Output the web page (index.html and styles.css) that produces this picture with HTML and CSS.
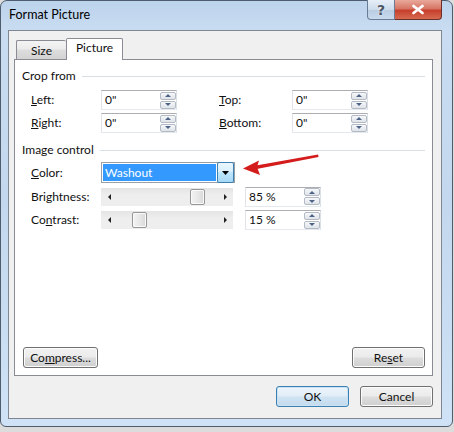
FILE: index.html
```html
<!DOCTYPE html>
<html>
<head>
<meta charset="utf-8">
<link rel="stylesheet" href="styles.css">
</head>
<body>
<div class="window">
  <div class="titlebar">
    <span class="title">Format Picture</span>
    <div class="caption">
      <div class="cbtn help">?</div>
      <div class="cbtn close">
        <svg width="14" height="11" viewBox="0 0 14 11"><path d="M2.5 2 L11.5 9 M11.5 2 L2.5 9" stroke="#fff" stroke-width="2.8" stroke-linecap="round"/></svg>
      </div>
    </div>
  </div>
  <div class="client">
    <div class="tabs">
      <div class="tab">Size</div>
      <div class="tab active">Picture</div>
    </div>
    <div class="panel">
      <div class="group-head"><span>Crop from</span><div class="rule"></div></div>
      <div class="crop-grid">
        <span class="lbl"><u>L</u>eft:</span>
        <div class="spin-box"><span>0"</span><div class="spinner"><div class="sb up"></div><div class="sb dn"></div></div></div>
        <span></span>
        <span class="lbl"><u>T</u>op:</span>
        <div class="spin-box"><span>0"</span><div class="spinner"><div class="sb up"></div><div class="sb dn"></div></div></div>
        <span class="lbl"><u>R</u>ight:</span>
        <div class="spin-box"><span>0"</span><div class="spinner"><div class="sb up"></div><div class="sb dn"></div></div></div>
        <span></span>
        <span class="lbl"><u>B</u>ottom:</span>
        <div class="spin-box"><span>0"</span><div class="spinner"><div class="sb up"></div><div class="sb dn"></div></div></div>
      </div>
      <div class="group-head second"><span>Image control</span><div class="rule"></div></div>
      <div class="ic-grid">
        <span class="lbl"><u>C</u>olor:</span>
        <div class="combo"><div class="sel">Washout</div><div class="drop"><svg width="7" height="4" viewBox="0 0 7 4"><path d="M0 0 H7 L3.5 4 Z" fill="#000"/></svg></div></div>
        <span></span>
        <span class="lbl">Bri<u>g</u>htness:</span>
        <div class="scroll"><i class="al"></i><div class="track"><div class="thumb" style="margin-left:73px"></div></div><i class="ar"></i></div>
        <div class="spin-box"><span>85 %</span><div class="spinner"><div class="sb up"></div><div class="sb dn"></div></div></div>
        <span class="lbl">Co<u>n</u>trast:</span>
        <div class="scroll"><i class="al"></i><div class="track"><div class="thumb" style="margin-left:15px"></div></div><i class="ar"></i></div>
        <div class="spin-box"><span>15 %</span><div class="spinner"><div class="sb up"></div><div class="sb dn"></div></div></div>
      </div>
      <div class="fill"></div>
      <div class="panel-buttons">
        <button class="btn compress">Co<u>m</u>press...</button>
        <button class="btn">Re<u>s</u>et</button>
      </div>
    </div>
    <div class="dlg-buttons">
      <button class="btn default">OK</button>
      <button class="btn">Cancel</button>
    </div>
  </div>
</div>
<svg class="annot" width="454" height="432" viewBox="0 0 454 432">
  <path d="M318 154.5 L256 165.5 L256.6 169 L318.6 157 Z" fill="#d41c1c"/>
  <path d="M243 168.5 L259 160.5 L257 167 L260 175 Z" fill="#d41c1c"/>
</svg>
</body>
</html>
```
FILE: styles.css
```css
* { box-sizing: border-box; }
html, body { margin: 0; padding: 0; }
body {
  width: 454px;
  height: 432px;
  background: #dcdcdc;
  font-family: Lato, "Noto Sans", sans-serif;
  font-size: 12px;
  color: #111;
  overflow: hidden;
  position: relative;
}
u { text-decoration: underline; text-underline-offset: 1px; }
.window {
  width: 453px;
  height: 427px;
  border: 1px solid #4e5d6e;
  border-radius: 7px 7px 6px 6px;
  background: linear-gradient(180deg, #bcd3ec 0px, #c9dcf1 30px, #c3d8ee 200px, #cfe2f6 100%);
  display: flex;
  flex-direction: column;
}
.titlebar {
  height: 29px;
  display: flex;
  align-items: flex-start;
  flex: none;
}
.title {
  margin-left: 8px;
  margin-top: 6px;
  font-size: 12.5px;
  line-height: 16px;
  color: #000;
}
.caption {
  margin-left: auto;
  margin-right: 10px;
  display: flex;
  margin-top: -1px;
}
.cbtn {
  height: 20px;
  border: 1px solid #6a7c93;
  border-top: none;
  display: flex;
  align-items: center;
  justify-content: center;
}
.help {
  width: 28px;
  border-radius: 0 0 0 4px;
  background: linear-gradient(180deg, #e6eef8 0%, #cddbeb 50%, #b7cbe2 51%, #c9daee 100%);
  color: #4a5566;
  font-family: "DejaVu Sans", sans-serif;
  font-size: 14px;
  font-weight: bold;
  line-height: 18px;
  text-shadow: 0 0 2px #fff;
}
.close {
  width: 47px;
  border-color: #6b2f2a;
  border-left: none;
  border-radius: 0 0 4px 0;
  background: linear-gradient(180deg, #e9a99b 0%, #d77565 45%, #c7402d 55%, #d66a50 100%);
}
.client {
  margin-left: 7px;
  width: 434px;
  height: 389px;
  border: 1px solid #7f8892;
  background: #f0f0f0;
  padding: 7px 8px 0 5px;
  display: flex;
  flex-direction: column;
  flex: none;
}
.tabs {
  display: flex;
  align-items: flex-end;
  height: 21px;
  padding-left: 2px;
  flex: none;
}
.tab {
  height: 19px;
  width: 50px;
  border: 1px solid #898c95;
  border-bottom: none;
  border-right: none;
  border-radius: 2px 2px 0 0;
  background: linear-gradient(180deg, #f4f4f4 0%, #ebebeb 45%, #dddddd 50%, #d3d3d3 100%);
  text-align: center;
  line-height: 18px;
  padding-top: 1px;
}
.tab.active {
  height: 22px;
  width: 57px;
  border-right: 1px solid #898c95;
  background: #fff;
  margin-bottom: -1px;
  position: relative;
  z-index: 1;
  line-height: 18px;
  padding-top: 0;
}
.panel {
  height: 317px;
  border: 1px solid #898c95;
  background: #fff;
  padding: 8px 7px 7px 7px;
  display: flex;
  flex-direction: column;
  flex: none;
}
.group-head {
  display: flex;
  align-items: center;
  height: 15px;
  line-height: 15px;
}
.group-head span { white-space: nowrap; }
.rule {
  flex: 1;
  height: 1px;
  background: #d5dfe5;
  margin-left: 6px;
  margin-top: 1px;
}
.group-head.second { margin-top: 9px; }
.crop-grid {
  margin-top: 7px;
  padding-left: 9px;
  display: grid;
  grid-template-columns: 70px 76px 42px 73px 76px;
  grid-auto-rows: 20px;
  row-gap: 3px;
  align-items: center;
}
.lbl { line-height: 16px; white-space: nowrap; }
.spin-box {
  width: 76px;
  height: 20px;
  border: 1px solid #abadb3;
  border-left-color: #e2e3ea;
  border-right-color: #dbdfe6;
  border-bottom-color: #e3e9ef;
  background: #fff;
  display: flex;
  align-items: center;
  padding-left: 3px;
}
.spin-box span { flex: 1; line-height: 16px; }
.spinner {
  width: 16px;
  height: 17px;
  display: flex;
  flex-direction: column;
  gap: 1px;
}
.sb {
  height: 8px;
  border: 1px solid #b4bac4;
  border-radius: 2px;
  background: linear-gradient(180deg, #f6f8fa, #dfe4ea);
  display: flex;
  align-items: center;
  justify-content: center;
}
.sb::after {
  content: "";
  width: 0; height: 0;
  border-left: 3px solid transparent;
  border-right: 3px solid transparent;
}
.sb.up::after { border-bottom: 3px solid #4e6385; }
.sb.dn::after { border-top: 3px solid #4e6385; }
.ic-grid {
  margin-top: 5px;
  padding-left: 9px;
  display: grid;
  grid-template-columns: 70px 144px 76px;
  grid-template-rows: 21px 19px 20px;
  row-gap: 4px;
  align-items: center;
}
.combo {
  width: 134px;
  height: 21px;
  border: 1px solid #9aa0a8;
  background: #fff;
  display: flex;
  padding: 1px 0 1px 1px;
}
.sel {
  flex: 1;
  background: #3399ff;
  color: #fff;
  line-height: 17px;
  padding-left: 2px;
  margin-right: 1px;
}
.drop {
  width: 17px;
  margin-top: -2px;
  margin-bottom: -2px;
  border: 1px solid #3c7fb1;
  border-radius: 2px;
  background: linear-gradient(180deg, #eaf6fd 0%, #d9f0fc 45%, #bee6fd 50%, #a7d9f5 100%);
  display: flex;
  align-items: center;
  justify-content: center;
}
.scroll {
  width: 132px;
  height: 18px;
  background: linear-gradient(180deg, #e4e4e4, #eeeeee 40%, #eeeeee);
  display: flex;
  align-items: center;
}
.scroll i {
  width: 16px;
  height: 18px;
  display: flex;
  align-items: center;
  justify-content: center;
}
.scroll i::after {
  content: "";
  width: 0; height: 0;
  border-top: 3.5px solid transparent;
  border-bottom: 3.5px solid transparent;
}
.scroll .al::after { border-right: 3px solid #222; }
.scroll .ar::after { border-left: 3px solid #222; }
.track { flex: 1; height: 18px; display: flex; align-items: center; }
.thumb {
  width: 15px;
  height: 16px;
  border: 1px solid #979797;
  border-radius: 2px;
  background: linear-gradient(90deg, #f3f3f3, #e8e8e8 50%, #d8d8d8);
  box-shadow: inset 0 0 0 1px #fafafa;
}
.fill { flex: 1; }
.panel-buttons {
  display: flex;
  justify-content: space-between;
  padding-left: 1px;
}
.btn {
  width: 73px;
  height: 21px;
  border: 1px solid #707070;
  border-radius: 3px;
  background: linear-gradient(180deg, #f2f2f2 0%, #ebebeb 48%, #dddddd 52%, #cfcfcf 100%);
  box-shadow: inset 0 0 0 1px #fcfcfc;
  font-family: inherit;
  font-size: 12px;
  color: #111;
  padding: 0;
  line-height: 17px;
}
.btn.compress { width: 75px; }
.btn.default {
  border-color: #3c7fb1;
  box-shadow: inset 0 0 0 1px #c9e3f5;
  background: linear-gradient(180deg, #eef5fb 0%, #e1edf7 48%, #d0e3f2 52%, #c3dbee 100%);
}
.dlg-buttons {
  margin-top: 10px;
  display: flex;
  justify-content: flex-end;
  gap: 11px;
}
.annot {
  position: absolute;
  left: 0;
  top: 0;
  pointer-events: none;
}
```
